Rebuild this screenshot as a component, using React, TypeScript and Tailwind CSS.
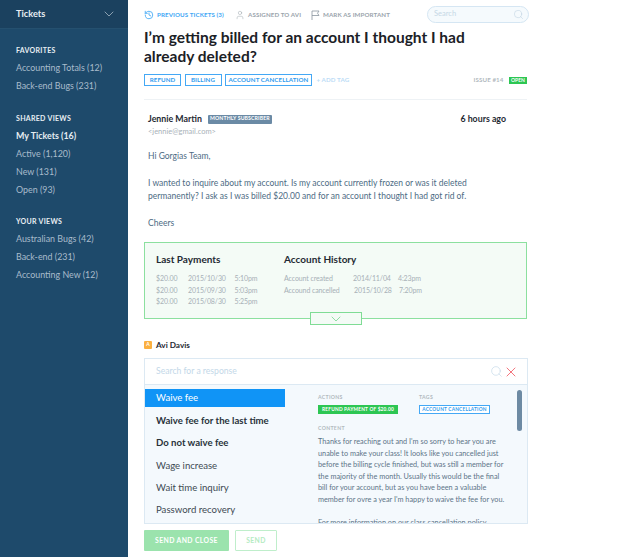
import { ChevronDown, History, Search, User, X } from "lucide-react";

const font = "font-['Lato','Noto_Sans',sans-serif]";

function NavGroup({ title, items, top }: { title: string; items: { label: string; active?: boolean }[]; top: string }) {
  return (
    <div className={top}>
      <div className="h-[12px] text-[7px] leading-[12px] font-bold tracking-[0.3px] text-[#e8eef3]">{title}</div>
      <div className="mt-[3px]">
        {items.map((item) => (
          <div
            key={item.label}
            className={
              item.active
                ? "h-[18px] text-[8.9px] leading-[18px] font-bold text-[#e6edf2]"
                : "h-[18px] text-[8.9px] leading-[18px] text-[#a9bccb]"
            }
          >
            {item.label}
          </div>
        ))}
      </div>
    </div>
  );
}

function Sidebar() {
  return (
    <aside className="w-[128px] h-[557px] shrink-0 bg-[#1e4a6b]">
      <div className="h-[29px] flex items-center justify-between pl-[16px] pr-[11px] bg-[#1b415f] border-b border-[#25506f]">
        <span className="text-[9.2px] font-bold text-[#e8eef3]">Tickets</span>
        <ChevronDown size={16} strokeWidth={1} className="text-[#c3d0da]" />
      </div>
      <div className="pl-[16px]">
        <NavGroup
          top="pt-[15px]"
          title="FAVORITES"
          items={[{ label: "Accounting Totals (12)" }, { label: "Back-end Bugs (231)" }]}
        />
        <NavGroup
          top="pt-[17px]"
          title="SHARED VIEWS"
          items={[
            { label: "My Tickets (16)", active: true },
            { label: "Active (1,120)" },
            { label: "New (131)" },
            { label: "Open (93)" },
          ]}
        />
        <NavGroup
          top="pt-[16px]"
          title="YOUR VIEWS"
          items={[{ label: "Australian Bugs (42)" }, { label: "Back-end (231)" }, { label: "Accounting New (12)" }]}
        />
      </div>
    </aside>
  );
}

function TopBar() {
  return (
    <div className="h-[28px] pt-[2px] flex items-center text-[6.2px] font-bold tracking-[0.1px]">
      <History size={10} className="text-[#3fa7f5]" />
      <span className="ml-[3px] w-[65px] whitespace-nowrap text-[#3fa7f5]">PREVIOUS TICKETS (3)</span>
      <User size={10} strokeWidth={1} className="ml-[13px] text-[#8a969f]" />
      <span className="ml-[3px] w-[49px] whitespace-nowrap text-[#9aa4ac]">ASSIGNED TO AVI</span>
      <svg width="9" height="10" viewBox="0 0 9 10" fill="none" stroke="#8a969f" strokeWidth="0.8" className="ml-[14px]">
        <path d="M1 10V1h7L6.5 3.2 8 5.5H1" />
      </svg>
      <span className="ml-[3px] whitespace-nowrap text-[#9aa4ac]">MARK AS IMPORTANT</span>
      <div className="ml-auto mr-[-2px] mb-[2px] w-[102px] h-[17px] flex items-center justify-between pl-[6px] pr-[4px] rounded-full border border-[#d5e6f3] bg-[#f5fafd]">
        <span className="text-[7.5px] font-normal tracking-normal text-[#c6d8e6]">Search</span>
        <Search size={11} strokeWidth={1} className="text-[#b5cbdb]" />
      </div>
    </div>
  );
}

function Tag({ label, width }: { label: string; width: string }) {
  return (
    <span className={`h-[12px] ${width} flex items-center justify-center whitespace-nowrap border border-[#44a8f5] text-[6.2px] font-bold tracking-[0.1px] text-[#2f9bee]`}>
      {label}
    </span>
  );
}

function Message() {
  return (
    <div className="pl-[4px]">
      <div className="flex items-center h-[12px]">
        <span className="text-[8.8px] font-bold text-[#1f2a33]">Jennie Martin</span>
        <span className="ml-[6px] h-[9px] w-[64px] flex items-center justify-center whitespace-nowrap rounded-[1px] bg-[#6b8aa5] text-[5.2px] font-bold tracking-[0.1px] text-white">
          MONTHLY SUBSCRIBER
        </span>
        <span className="ml-auto mr-[21px] text-[8.8px] font-bold text-[#1f2a33]">6 hours ago</span>
      </div>
      <div className="mt-[1px] h-[12px] text-[7.5px] leading-[12px] text-[#a9b2b9]">&lt;jennie@gmail.com&gt;</div>
      <div className="mt-[12px] text-[8.5px] leading-[13.4px] text-[#4d6b84]">
        <p>Hi Gorgias Team,</p>
        <p className="mt-[13.4px]">
          I wanted to inquire about my account. Is my account currently frozen or was it deleted
          <br />
          permanently? I ask as I was billed $20.00 and for an account I thought I had got rid of.
        </p>
        <p className="mt-[13.4px]">Cheers</p>
      </div>
    </div>
  );
}

function Row({ cells, widths }: { cells: string[]; widths: string[] }) {
  return (
    <div className="flex h-[11.5px] text-[7px] leading-[11.5px] tracking-[-0.1px] text-[#a7b0b6]">
      {cells.map((c, i) => (
        <span key={c} className={widths[i]}>
          {c}
        </span>
      ))}
    </div>
  );
}

function InfoBox() {
  const payW = ["w-[32px]", "w-[46.5px]", "w-[30px]"];
  return (
    <div className="relative mt-[11.6px] h-[77px] border border-[#8ce09f] bg-[#f4fbf6] flex pl-[11px] pt-[10px]">
      <div className="w-[128px]">
        <div className="text-[10px] leading-[13px] font-bold text-[#1f2a33]">Last Payments</div>
        <div className="mt-[7px]">
          <Row widths={payW} cells={["$20.00", "2015/10/30", "5:10pm"]} />
          <Row widths={payW} cells={["$20.00", "2015/09/30", "5:03pm"]} />
          <Row widths={payW} cells={["$20.00", "2015/08/30", "5:25pm"]} />
        </div>
      </div>
      <div>
        <div className="text-[10px] leading-[13px] font-bold text-[#1f2a33]">Account History</div>
        <div className="mt-[7px]">
          <Row widths={["w-[69px]", "w-[45px]", "w-[30px]"]} cells={["Account created", "2014/11/04", "4:23pm"]} />
          <Row widths={["w-[70px]", "w-[45px]", "w-[30px]"]} cells={["Accound cancelled", "2015/10/28", "7:20pm"]} />
        </div>
      </div>
      <div className="absolute left-[165px] top-[69px] w-[52px] h-[13px] flex items-center justify-center border border-[#7fdc95] bg-[#f4fbf6]">
        <ChevronDown size={16} strokeWidth={1} className="text-[#5fcf7c]" />
      </div>
    </div>
  );
}

const responses = [
  { label: "Waive fee", cls: "bg-[#1094f6] text-white h-[18px] mb-[5px]" },
  { label: "Waive fee for the last time", cls: "font-bold text-[#28323a] h-[18px] mb-[4.4px]" },
  { label: "Do not waive fee", cls: "font-bold text-[#28323a] h-[18px] mb-[4.4px]" },
  { label: "Wage increase", cls: "text-[#3e4a53] h-[18px] mb-[4.4px]" },
  { label: "Wait time inquiry", cls: "text-[#3e4a53] h-[18px] mb-[4.4px]" },
  { label: "Password recovery", cls: "text-[#3e4a53] h-[18px]" },
];

function ResponsePanel() {
  return (
    <div className="mt-[7px] w-[384px] border border-[#dce9f3]">
      <div className="h-[26px] flex items-center pl-[11px] pr-[8px] border-b border-[#dce9f3] bg-white">
        <span className="text-[8.6px] text-[#c3d8e8]">Search for a response</span>
        <Search size={13} strokeWidth={1} className="ml-auto text-[#b6d0e3]" />
        <X size={16} strokeWidth={1.2} className="text-[#f0525c]" />
      </div>
      <div className="relative h-[138px] flex overflow-hidden bg-[#f4f9fd]">
        <div className="w-[140px] shrink-0 pt-[4px]">
          {responses.map((r) => (
            <div key={r.label} className={`-ml-px w-[141px] pl-[12px] flex items-center text-[9.6px] ${r.cls}`}>
              {r.label}
            </div>
          ))}
        </div>
        <div className="ml-[33px] w-[196px] pt-[8px]">
          <div className="flex">
            <div className="w-[101px]">
              <div className="h-[9px] text-[5.2px] leading-[9px] font-bold tracking-[0.3px] text-[#b2bac0]">ACTIONS</div>
              <span className="mt-[3px] flex h-[9px] w-[80px] items-center justify-center whitespace-nowrap bg-[#2dc653] text-[4.8px] font-bold tracking-[0.2px] text-white">
                REFUND PAYMENT OF $20.00
              </span>
            </div>
            <div>
              <div className="h-[9px] text-[5.2px] leading-[9px] font-bold tracking-[0.3px] text-[#b2bac0]">TAGS</div>
              <span className="mt-[3px] flex h-[9px] w-[71px] items-center justify-center whitespace-nowrap border border-[#44a8f5] bg-white text-[4.8px] font-bold tracking-[0.2px] text-[#2f9bee]">
                ACCOUNT CANCELLATION
              </span>
            </div>
          </div>
          <div className="mt-[10px] h-[9px] text-[5.2px] leading-[9px] font-bold tracking-[0.3px] text-[#b2bac0]">CONTENT</div>
          <p className="mt-[3px] whitespace-nowrap text-[7.3px] leading-[11.5px] text-[#5c7488]">
            Thanks for reaching out and I'm so sorry to hear you are
            <br />
            unable to make your class! It looks like you cancelled just
            <br />
            before the billing cycle finished, but was still a member for
            <br />
            the majority of the month. Usually this would be the final
            <br />
            bill for your account, but as you have been a valuable
            <br />
            member for ovre a year I'm happy to waive the fee for you.
          </p>
          <p className="mt-[11.5px] whitespace-nowrap text-[7.3px] leading-[11.5px] text-[#5c7488]">
            For more information on our class cancellation policy
          </p>
        </div>
        <div className="absolute left-[372px] top-[5px] w-[5px] h-[41px] rounded-full bg-[#6d8aa3]" />
      </div>
    </div>
  );
}

export default function App() {
  return (
    <div className={`${font} flex w-[640px] h-[557px] overflow-hidden bg-white`}>
      <Sidebar />
      <main className="ml-[16px] w-[383px]">
        <TopBar />
        <h1 className="text-[15.5px] leading-[19px] font-bold text-[#1b2126]">
          I’m getting billed for an account I thought I had
          <br />
          already deleted?
        </h1>
        <div className="mt-[8px] flex items-center gap-[3.5px] h-[12px]">
          <Tag label="REFUND" width="w-[37px]" />
          <Tag label="BILLING" width="w-[37px]" />
          <Tag label="ACCOUNT CANCELLATION" width="w-[87px]" />
          <span className="ml-[1px] text-[6.2px] font-bold tracking-[0.1px] text-[#bcdcf6]">+ ADD TAG</span>
          <span className="ml-auto text-[6.2px] font-bold tracking-[0.1px] text-[#b2bac0]">ISSUE #14</span>
          <span className="ml-[2px] h-[7px] w-[18px] flex items-center justify-center bg-[#2dc653] text-[5px] leading-[7px] font-bold text-white">OPEN</span>
        </div>
        <div className="mt-[13px] mb-[13px] border-t border-[#eef2f5]" />
        <Message />
        <InfoBox />
        <div className="mt-[20px] flex items-center h-[12px]">
          <span className="w-[8px] h-[8px] flex items-center justify-center rounded-[1px] bg-[#fbb040] text-[5px] font-bold text-white">A</span>
          <span className="ml-[4px] text-[8.2px] font-bold text-[#1f2a33]">Avi Davis</span>
        </div>
        <ResponsePanel />
        <div className="mt-[6px] flex gap-[6px]">
          <button className="w-[85px] h-[21px] rounded-[1px] bg-[#9be3ad] text-[6.8px] font-bold tracking-[0.4px] text-white">SEND AND CLOSE</button>
          <button className="w-[42px] h-[21px] rounded-[1px] border border-[#bfeecb] text-[6.8px] font-bold tracking-[0.4px] text-[#b4ebc2]">SEND</button>
        </div>
      </main>
    </div>
  );
}
